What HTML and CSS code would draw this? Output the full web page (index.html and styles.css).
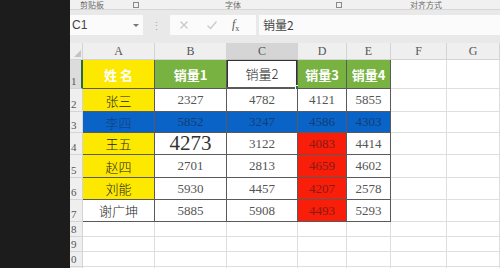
FILE: index.html
```html
<!DOCTYPE html>
<html lang="zh">
<head>
<meta charset="utf-8">
<link rel="stylesheet" href="styles.css">
</head>
<body>
<div class="app">
  <div class="dark"></div>
  <div class="excel">
    <div class="ribbon">
      <span class="rl l1">剪贴板</span>
      <span class="launch l2"></span>
      <span class="rl l3">字体</span>
      <span class="launch l4"></span>
      <span class="rl l5">对齐方式</span>
    </div>
    <div class="fbar">
      <div class="namebox"><span class="ref">C1</span><span class="arrow"></span></div>
      <div class="dots">⋮</div>
      <div class="fxbox">
        <svg class="ico" width="12" height="12" viewBox="0 0 12 12"><path d="M2.5 2.5 L9.5 9.5 M9.5 2.5 L2.5 9.5" stroke="#c8c8c8" stroke-width="1.2" fill="none"/></svg>
        <svg class="ico" width="12" height="12" viewBox="0 0 12 12"><path d="M1.5 6.5 L4.5 9.5 L10.5 2.5" stroke="#c8c8c8" stroke-width="1.2" fill="none"/></svg>
        <span class="fx"><i>f</i><sub>x</sub></span>
      </div>
      <div class="finput">销量2</div>
    </div>
    <div class="grid">
      <div class="corner"><span class="tri"></span></div>
      <div class="ch">A</div><div class="ch">B</div><div class="ch sel">C</div><div class="ch">D</div><div class="ch">E</div><div class="ch">F</div><div class="ch">G</div>

      <div class="rh r1 selrow">1</div>
      <div class="c b yel hdr">姓 名</div><div class="c b grn hdr">销量1</div><div class="c b active">销量2<span class="handle"></span></div><div class="c b grn hdr">销量3</div><div class="c b grn hdr">销量4</div><div class="c"></div><div class="c"></div>

      <div class="rh">2</div>
      <div class="c b yel zh">张三</div><div class="c b n">2327</div><div class="c b n">4782</div><div class="c b n">4121</div><div class="c b n">5855</div><div class="c"></div><div class="c"></div>

      <div class="rh">3</div>
      <div class="c b blu zh">李四</div><div class="c b blu n">5852</div><div class="c b blu n">3247</div><div class="c b blu n">4586</div><div class="c b blu n">4303</div><div class="c"></div><div class="c"></div>

      <div class="rh">4</div>
      <div class="c b yel zh">王五</div><div class="c b n big">4273</div><div class="c b n">3122</div><div class="c b red n">4083</div><div class="c b n">4414</div><div class="c"></div><div class="c"></div>

      <div class="rh">5</div>
      <div class="c b yel zh">赵四</div><div class="c b n">2701</div><div class="c b n">2813</div><div class="c b red n">4659</div><div class="c b n">4602</div><div class="c"></div><div class="c"></div>

      <div class="rh">6</div>
      <div class="c b yel zh">刘能</div><div class="c b n">5930</div><div class="c b n">4457</div><div class="c b red n">4207</div><div class="c b n">2578</div><div class="c"></div><div class="c"></div>

      <div class="rh">7</div>
      <div class="c b zh">谢广坤</div><div class="c b n">5885</div><div class="c b n">5908</div><div class="c b red n">4493</div><div class="c b n">5293</div><div class="c"></div><div class="c"></div>

      <div class="rh">8</div>
      <div class="c"></div><div class="c"></div><div class="c"></div><div class="c"></div><div class="c"></div><div class="c"></div><div class="c"></div>
      <div class="rh">9</div>
      <div class="c"></div><div class="c"></div><div class="c"></div><div class="c"></div><div class="c"></div><div class="c"></div><div class="c"></div>
      <div class="rh">0</div>
      <div class="c"></div><div class="c"></div><div class="c"></div><div class="c"></div><div class="c"></div><div class="c"></div><div class="c"></div>
      <div class="rh"></div>
      <div class="c"></div><div class="c"></div><div class="c"></div><div class="c"></div><div class="c"></div><div class="c"></div><div class="c"></div>
    </div>
  </div>
</div>
</body>
</html>
```

FILE: styles.css
```css
* { box-sizing: border-box; }
html, body { margin: 0; padding: 0; }
body {
  width: 500px;
  height: 268px;
  overflow: hidden;
  background: #1c1c1c;
  font-family: "Noto Sans CJK SC", "Liberation Sans", sans-serif;
}
.app { display: flex; width: 500px; height: 268px; }
.dark { width: 70px; flex: none; background: #1c1c1c; }
.excel {
  width: 430px;
  flex: none;
  display: flex;
  flex-direction: column;
  background: #e9e9e9;
  overflow: hidden;
}
.ribbon {
  height: 10px;
  flex: none;
  display: flex;
  align-items: center;
  background: #f1f1f1;
  border-bottom: 1px solid #d6d6d6;
}
.rl {
  font-size: 8px;
  line-height: 9px;
  color: #6a6a6a;
  white-space: nowrap;
}
.launch {
  width: 6px; height: 6px;
  border: 1px solid #8a8a8a;
}
.l1 { margin-left: 10px; }
.l2 { margin-left: 29px; }
.l3 { margin-left: 86px; }
.l4 { margin-left: 95px; }
.l5 { margin-left: 68px; }

.fbar {
  height: 33px;
  flex: none;
  display: flex;
  align-items: flex-start;
  padding-top: 5px;
  background: #e9e9e9;
}
.namebox {
  width: 73px;
  height: 20px;
  background: #fbfbfb;
  display: flex;
  align-items: center;
  justify-content: space-between;
  padding: 0 4px 0 2px;
}
.ref { font-family: "Liberation Sans", sans-serif; font-size: 12px; color: #444; }
.arrow {
  width: 0; height: 0;
  border-left: 3px solid transparent;
  border-right: 3px solid transparent;
  border-top: 3px solid #777;
}
.dots {
  width: 27px;
  text-align: center;
  color: #aaa;
  font-size: 11px;
  line-height: 20px;
}
.fxbox {
  width: 86px;
  height: 20px;
  background: #fbfbfb;
  display: flex;
  align-items: center;
  padding-left: 8px;
  gap: 16px;
}
.fx {
  font-family: "Liberation Serif", serif;
  font-size: 12px;
  color: #555;
  margin-left: -2px;
}
.fx sub { font-size: 8px; }
.finput {
  margin-left: 3px;
  flex: 1;
  height: 20px;
  background: #fbfbfb;
  font-size: 12px;
  line-height: 20px;
  padding-left: 4px;
  color: #444;
}

.grid {
  flex: 1;
  display: grid;
  grid-template-columns: 13px 72px 72px 71px 49px 44px 56px 1fr;
  grid-template-rows: 17px 29px 23px 21px 22px 23px 22px 22px 15px 15px 15px 15px;
  background: #fff;
}
.corner, .ch, .rh {
  background: #efefef;
  border-right: 1px solid #d4d4d4;
  border-bottom: 1px solid #d4d4d4;
  color: #555;
  font-family: "Liberation Serif", serif;
  font-size: 12px;
}
.corner { display: flex; align-items: flex-end; justify-content: flex-end; padding: 0 1px 2px 0; }
.tri {
  width: 0; height: 0;
  border-left: 7px solid transparent;
  border-bottom: 7px solid #c4c4c4;
}
.ch { display: flex; align-items: center; justify-content: center; padding-top: 1px; }
.ch.sel { background: #d5d5d5; border-bottom: 1px solid #bdbdbd; }
.rh {
  display: flex;
  align-items: flex-end;
  padding-left: 1px;
  font-size: 11px;
  line-height: 13px;
  overflow: hidden;
}
.rh.selrow { background: #dcdcdc; border-right: 2px solid #2b6a3e; }
.c {
  border-right: 1px solid #dedede;
  border-bottom: 1px solid #dedede;
  display: flex;
  align-items: center;
  justify-content: center;
  font-size: 13px;
  color: #333;
  position: relative;
}
.c.b { border-right-color: #5a5a5a; border-bottom-color: #5a5a5a; }
.n { font-family: "Liberation Serif", serif; font-size: 13px; color: #555; }
.big { font-size: 21px; color: #333; }
.zh { color: #222; font-weight: 300; }
.yel { background: #fde800; }
.grn { background: #78b241; }
.blu { background: #0a64c8; color: #113c74; }
.red { background: #f81e0a; color: #8a1a12; }
.hdr { color: #fff; font-weight: bold; }
.active {
  box-shadow: inset 1px 1px 0 #333, inset -1px 0 0 #333;
  border-bottom: 2px solid #2b6a3e;
  color: #222;
  font-weight: 300;
}
.handle {
  position: absolute;
  right: -3px;
  bottom: -3px;
  width: 5px;
  height: 5px;
  background: #2b6a3e;
  border: 1px solid #fff;
}
```
